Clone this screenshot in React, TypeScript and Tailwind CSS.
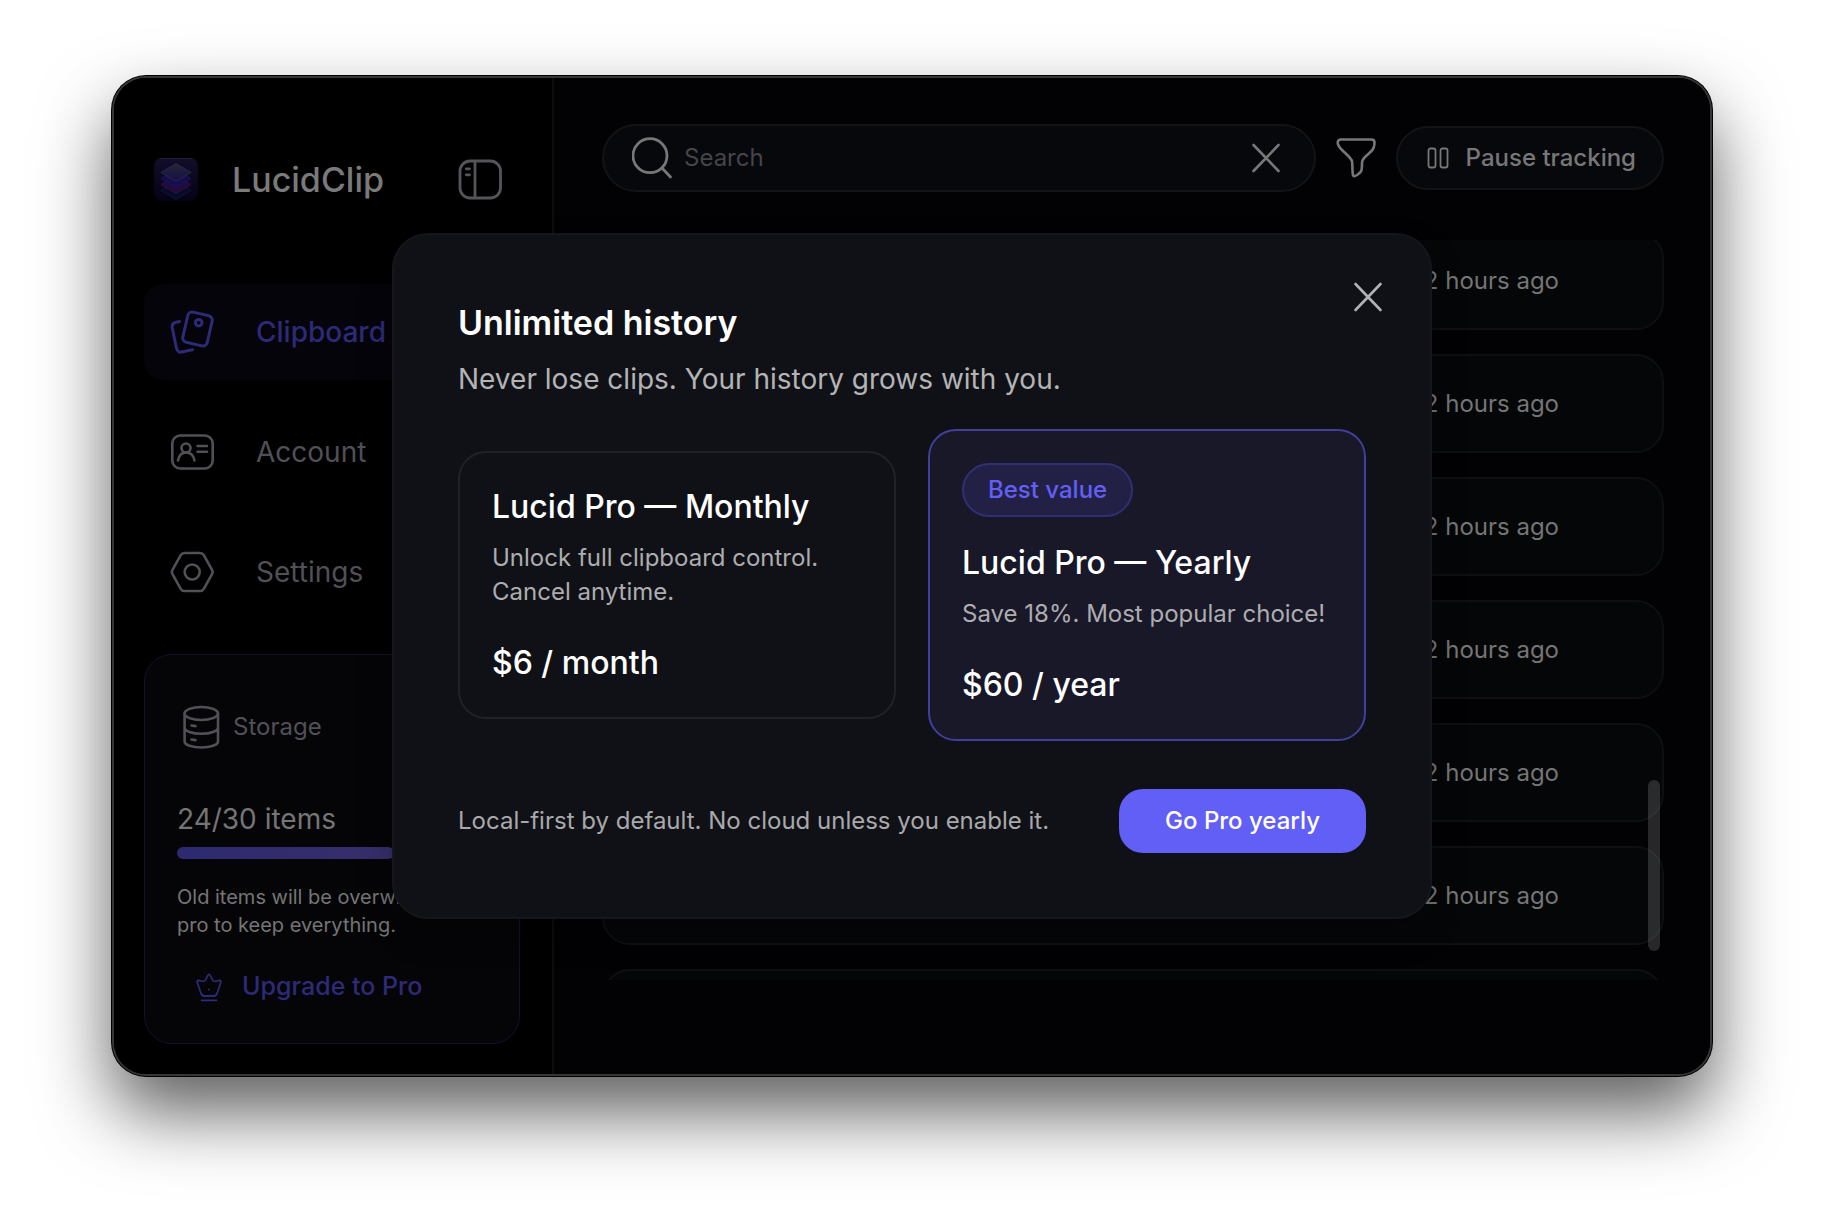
import { useId, useState } from "react"
import type { ReactNode } from "react"

const Icon = ({ className, box = 44, width = 3, children }: { className: string, box?: number, width?: number, children: ReactNode }) => (
  <svg className={className} viewBox={`0 0 ${box} ${box}`} fill="none" stroke="currentColor" strokeWidth={width} strokeLinecap="round" strokeLinejoin="round" aria-hidden="true">
    {children}
  </svg>
)

const Logo = () => (
  <svg className="size-11" viewBox="0 0 44 44" fill="none" aria-hidden="true">
    <defs>
      <linearGradient id="logo-bg" x1="0" y1="0" x2="0" y2="1">
        <stop offset="0" stopColor="#120d2a" />
        <stop offset="1" stopColor="#040214" />
      </linearGradient>
      <linearGradient id="logo-top" x1="0" y1="0" x2="0" y2="1">
        <stop offset="0" stopColor="#26253b" />
        <stop offset="1" stopColor="#150f45" />
      </linearGradient>
    </defs>
    <rect width="44" height="43" rx="8" fill="url(#logo-bg)" />
    <path d="M6 .6h32" stroke="#221f38" strokeWidth="1" strokeLinecap="round" />
    <path d="M7 32.500l15-9 15 9-15 9z" fill="#080b26" stroke="#111a3c" strokeWidth=".8" />
    <path d="M7 26.500l15-9 15 9-15 9z" fill="#200b3c" stroke="#37124f" strokeWidth=".8" />
    <path d="M7 20.500l15-9 15 9-15 9z" fill="#160d4c" stroke="#21155c" strokeWidth=".8" />
    <path d="M7 14.500l15-9 15 9-15 9z" fill="url(#logo-top)" stroke="#2f2e44" strokeWidth=".8" />
  </svg>
)

const ClipboardIcon = () => (
  <Icon className="size-11">
    <rect x="-12.500" y="-15.500" width="25" height="31" rx="4.500" transform="translate(27.500 19) rotate(13)" />
    <circle cx="28.700" cy="12.700" r="3.300" />
    <path d="M9.500 11.500 6 12.300C3 13 1.700 15 2.300 18L6.300 37.500C7 41 8.500 42.600 11.500 42L22.500 39.800" />
  </Icon>
)

const AccountIcon = () => (
  <Icon className="size-11" width={2.6}>
    <rect x="2.300" y="5.500" width="40.400" height="33" rx="8" />
    <circle cx="16" cy="18" r="4.500" />
    <path d="M8 30.500c1-5.500 4-8 8-8s7.500 2.500 8.500 8M27.500 16h9.500M27.500 21.700h9.500" />
  </Icon>
)

const SettingsIcon = () => (
  <Icon className="size-11" width={2.6}>
    <path d="M14.500 3h15.500q2.500 0 3.800 2.200l8.200 14.600q1.300 2.200 0 4.400l-8.200 14.600q-1.300 2.200-3.800 2.200H14.500q-2.500 0-3.800-2.200L2.500 24.200q-1.300-2.200 0-4.400l8.200-14.600q1.300-2.200 3.800-2.200z" />
    <circle cx="22.200" cy="22" r="7.500" />
  </Icon>
)

const StorageIcon = () => (
  <Icon className="size-11" width={2.6}>
    <ellipse cx="21.300" cy="8.500" rx="16.700" ry="6.500" />
    <path d="M4.600 8.500v28c0 3.500 7.500 6 16.700 6s16.700-2.500 16.700-6v-28M4.600 22.500c0 3.700 7.500 6.300 16.700 6.300s16.700-2.600 16.700-6.300M11.500 20.500l4 .6M11.500 34.500l4 .6" />
  </Icon>
)

const CloseIcon = () => (
  <Icon className="size-10" box={40} width={2.6}>
    <path d="M7.500 7l25 26M32.500 7l-25 26" />
  </Icon>
)

const navItems = [
  { name: "Clipboard", icon: <ClipboardIcon />, active: true },
  { name: "Account", icon: <AccountIcon />, active: false },
  { name: "Settings", icon: <SettingsIcon />, active: false },
]

const clips = [1, 2, 3, 4, 5, 6]

const Sidebar = () => (
  <aside className="flex w-[440px] shrink-0 flex-col border-r-2 border-[#0d0d0d] bg-black pt-20 pr-8 pb-[30px] pl-[30px]">
    <div className="flex items-center pr-[18px] pl-[10px]">
      <Logo />
      <span className="ml-[34px] text-[34px] leading-[44px] font-medium text-[#7a7a7a]">LucidClip</span>
      <button aria-label="Toggle sidebar" className="ml-auto text-[#55545a]">
        <Icon className="size-11" width={2.8}>
          <rect x="2" y="3" width="40.500" height="37" rx="10" />
          <path d="M17 3.500v36M8.300 10.800h3.200M8.300 16.800h3.200" />
        </Icon>
      </button>
    </div>
    <nav className="mt-[82px] flex flex-col gap-6">
      {navItems.map((item) => (
        <a key={item.name} href="#" className={item.active
          ? "flex h-24 items-center rounded-[20px] bg-[#05040a] px-[26px] text-[#2d2a77]"
          : "flex h-24 items-center rounded-[20px] px-[26px] text-[#515057]"}>
          {item.icon}
          <span className={item.active ? "ml-[42px] text-[28px] font-medium" : "ml-[42px] text-[28px]"}>{item.name}</span>
        </a>
      ))}
    </nav>
    <section className="mt-auto rounded-[28px] border border-[#131130] bg-[#050507] px-8 pt-[50px] pb-[34px]">
      <div className="flex items-center gap-[9px] pl-[3px] text-[#515057]">
        <StorageIcon />
        <h2 className="text-[24px] leading-[44px]">Storage</h2>
      </div>
      <p className="mt-[52px] text-[28px] leading-9 text-[#757575]">24/30 items</p>
      <div className="mt-[10px] h-3">
        <div className="h-3 w-[70%] rounded-full bg-linear-to-r from-[#2d2a70] to-[#372e6a]" />
      </div>
      <p className="mt-6 text-[20px] leading-7 whitespace-nowrap text-[#757575]">
        Old items will be overwritten. Go<br />
        pro to keep everything.
      </p>
      <button className="mt-[26px] ml-[18px] flex h-11 items-center gap-[17px] text-[25px] font-medium text-[#2d2a77]">
        <Icon className="size-[30px]" box={30} width={1.8}>
          <path d="M14 2.300c1 0 1.400.8 3.300 5.200.8 2 2 2.300 4.500 1.500 3.500-1 4.600-.6 3.900 1.800l-3.300 9.700c-.6 2-1.500 3.500-3.500 3.500H9.200c-2 0-3-1.500-3.500-3.500L2.300 10.800C1.600 8.400 2.700 8 6.200 9c2.500.8 3.700.5 4.500-1.500C12.600 3.100 13 2.300 14 2.300zM6.500 28.300h15M14 17.500v.2" />
        </Icon>
        Upgrade to Pro
      </button>
    </section>
  </aside>
)

const History = () => {

  const search = useId()

  return (
    <main className="flex min-w-0 flex-1 flex-col bg-[#020204] pt-[46px] pr-[46px] pb-[94px] pl-12">
      <div className="flex items-center gap-5">
        <div className="flex h-[68px] min-w-0 flex-1 items-center rounded-full border-2 border-[#131315] bg-[#07080c] pr-[28px] pl-7 text-[#777777]">
          <label htmlFor={search} aria-label="Search">
            <Icon className="size-[42px]" box={42} width={2.8}>
              <circle cx="18" cy="18.700" r="17" />
              <path d="m30 31 8.500 9" />
            </Icon>
          </label>
          <input id={search} type="text" placeholder="Search" className="ml-[10px] min-w-0 flex-1 bg-transparent text-[24px] outline-none placeholder:text-[#454549]" />
          <button aria-label="Clear search"><CloseIcon /></button>
        </div>
        <button aria-label="Filter" className="text-[#777777]">
          <Icon className="size-10" box={40} width={2.6}>
            <path d="M5 1.500h30.500c2 0 3 1 3 3 0 4-.5 6-3 8.500l-6.500 6c-2.500 2.300-3 3.500-3 6.500 0 7.500-.5 8.500-5 11.500-2.500 1.500-4 2-4.300-1.500-.3-3-.3-5-.4-10 0-3-.7-4.200-3-6.500l-6.500-6.200C4.500 10.500 1.700 8 1.700 4.500c0-2 1.300-3 3.300-3z" />
          </Icon>
        </button>
        <button className="flex h-16 items-center gap-4 rounded-full border-2 border-[#131315] bg-[#07080c] pr-[26px] pl-7 text-[24px] font-medium whitespace-nowrap text-[#777777]">
          <Icon className="size-6" box={24} width={1.8}>
            <rect x="2.500" y="2.500" width="7" height="19" rx="2" />
            <rect x="14.500" y="2.500" width="7" height="19" rx="2" />
          </Icon>
          Pause tracking
        </button>
      </div>
      <div className="relative mt-12 min-h-0 flex-1 overflow-hidden">
        <ul className="-mt-[9px] flex flex-col gap-6">
          {clips.map((clip) => (
            <li key={clip} className="flex h-[99px] shrink-0 items-center justify-end rounded-[28px] border-2 border-[#0e0f10] bg-[#050608] pr-[103px] text-[24px] text-[#757575]">
              2 hours ago
            </li>
          ))}
          {/* next row, only its top edge is in view */}
          <li aria-hidden="true" className="h-[99px] shrink-0 rounded-[28px] border-2 border-[#0e0f10] bg-[#050608]" />
        </ul>
        <div className="absolute right-1 bottom-[29px] h-[171px] w-3 rounded-full bg-white/15" />
      </div>
    </main>
  )
}

const plans = [
  { id: "monthly", name: "Lucid Pro — Monthly", text: "Unlock full clipboard control. Cancel anytime.", price: "$6 / month", badge: "" },
  { id: "yearly", name: "Lucid Pro — Yearly", text: "Save 18%. Most popular choice!", price: "$60 / year", badge: "Best value" },
]

const UpgradeDialog = () => {

  const title = useId()

  const [selected, setSelected] = useState("yearly")

  return (
    <div role="dialog" aria-labelledby={title} className="relative w-[1040px] rounded-[36px] border-2 border-[#15151b] bg-[#101116] p-16 shadow-[0_16px_32px_rgba(0,0,0,0.25)]">
      <button aria-label="Close" className="absolute top-[42px] right-[42px] text-[#b2b2b6]"><CloseIcon /></button>
      <h1 id={title} className="text-[34px] leading-[48px] font-semibold text-white">Unlimited history</h1>
      <p className="mt-[14px] text-[28px] leading-9 text-[#b4b4b6]">Never lose clips. Your history grows with you.</p>
      <div className="mt-8 grid grid-cols-2 items-center gap-8">
        {plans.map((plan) => (
          <button
            key={plan.id}
            aria-pressed={selected === plan.id}
            onClick={() => setSelected(plan.id)}
            className={selected === plan.id
              ? "rounded-[28px] border-2 border-[#413e9c] bg-[#181829] p-8 text-left"
              : "rounded-[28px] border-2 border-[#212226] bg-[#101116] p-8 text-left"}
          >
            {plan.badge && (
              <span className="mb-6 flex h-[54px] w-fit items-center rounded-full border-2 border-[#312f73] bg-[#222145] px-6 text-[24px] font-medium text-[#625ff6]">{plan.badge}</span>
            )}
            <span className="block text-[32px] leading-[44px] font-medium whitespace-nowrap text-white">{plan.name}</span>
            <span className="mt-3 block text-[24px] leading-[34px] text-[#adadb0]">{plan.text}</span>
            <span className="mt-8 block text-[32px] leading-[44px] font-medium text-white">{plan.price}</span>
          </button>
        ))}
      </div>
      <div className="mt-12 flex items-center justify-between">
        <p className="text-[24px] text-[#a9a9ac]">Local-first by default. No cloud unless you enable it.</p>
        <button className="h-16 rounded-3xl bg-[#625ff6] px-[46px] text-[24px] font-medium text-white">Go Pro {selected}</button>
      </div>
    </div>
  )
}

const App = () => {
  return (
    <div className="flex h-screen bg-white px-28 pt-19 pb-37 font-['Inter',sans-serif]">
      <div className="relative flex flex-1 overflow-hidden rounded-[34px] border-2 border-[#353535] bg-black shadow-[0_0_0_1px_#000,0_36px_72px_rgba(0,0,0,0.64)]">
        <Sidebar />
        <History />
        <div className="absolute inset-0 flex items-center justify-center">
          <UpgradeDialog />
        </div>
      </div>
    </div>
  )
}

export default App
